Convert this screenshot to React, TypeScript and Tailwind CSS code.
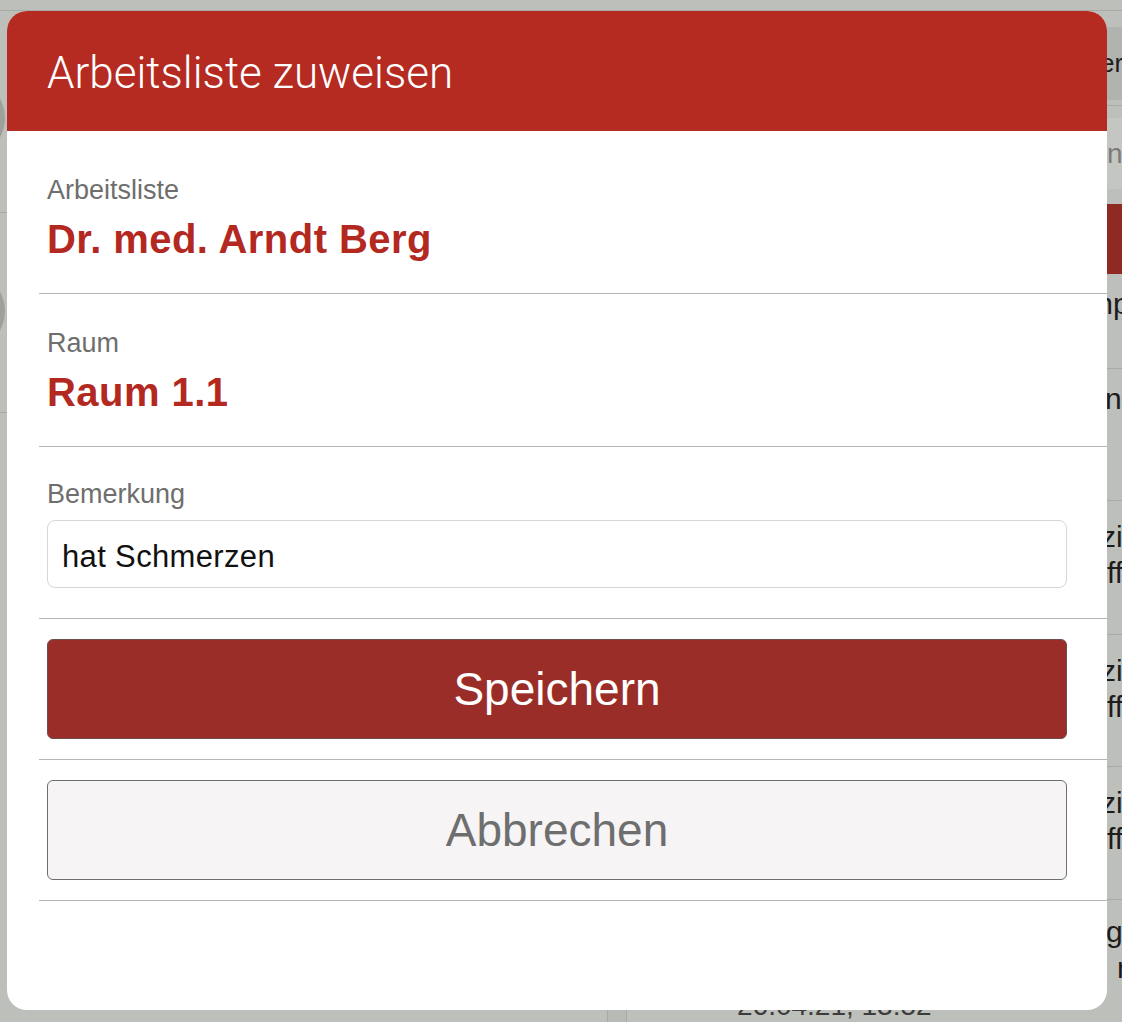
import React from "react";

const font = "font-['Liberation_Sans',Arial,sans-serif]";

function ListRow({
  lines,
  className,
}: {
  lines: { text: string; left: string; top: string }[];
  className: string;
}) {
  return (
    <div className={`flex flex-col border-b border-[#a8aaa6] ${className}`}>
      {lines.map((l, i) => (
        <div
          key={i}
          className={`whitespace-nowrap text-[30px] leading-[36px] text-[#1c1c1c] ${l.left} ${l.top}`}
        >
          {l.text}
        </div>
      ))}
    </div>
  );
}

export default function App() {
  return (
    <div className={`relative w-[1122px] h-[1022px] overflow-hidden bg-[#bdbfbb] ${font}`}>
      {/* app behind the dialog */}
      <div className="h-[11px] border-b border-[#a8aaa6]" />
      <div className="flex h-[1011px]">
        {/* patient list */}
        <div className="w-[607px] flex flex-col">
          <div className="h-[202px] flex items-center border-b border-[#a8aaa6]">
            <div className="w-20 h-20 -ml-[75px] mt-[12px] rounded-full bg-[#9ea09c]" />
          </div>
          <div className="h-[200px] flex items-center border-b border-[#a8aaa6]">
            <div className="w-20 h-20 -ml-[75px] -mt-[4px] rounded-full bg-[#9ea09c]" />
          </div>
        </div>
        <div className="w-[20px] border-x border-[#a8aaa6] bg-[#b8bab6]" />
        {/* worklist */}
        <div className="flex-1 flex flex-col overflow-hidden">
          <div className="h-[16px]" />
          <div className="h-[73px] bg-[#b1b3af] flex items-center pl-[473px] text-[26px] text-[#1c1c1c] whitespace-nowrap">
            erledigt
          </div>
          <div className="h-[6px] border-b border-[#a8aaa6]" />
          <div className="h-[12px]" />
          <div className="h-[72px] bg-[#c4c6c2] flex items-center pl-[480px] text-[28px] text-[#7a7a7a] whitespace-nowrap">
            n
          </div>
          <div className="h-[15px]" />
          <div className="h-[70px] bg-[#8f2a23]" />
          <ListRow
            className="h-[95px]"
            lines={[{ text: "mpfang", left: "pl-[461px]", top: "pt-[12px]" }]}
          />
          <ListRow
            className="h-[133px]"
            lines={[{ text: "n", left: "pl-[478px]", top: "pt-[12px]" }]}
          />
          <ListRow
            className="h-[134px]"
            lines={[
              { text: "zimmer", left: "pl-[474px]", top: "pt-[18px]" },
              { text: "ffen", left: "pl-[480px]", top: "" },
            ]}
          />
          <ListRow
            className="h-[133px]"
            lines={[
              { text: "zimmer", left: "pl-[474px]", top: "pt-[18px]" },
              { text: "ffen", left: "pl-[480px]", top: "" },
            ]}
          />
          <ListRow
            className="h-[133px]"
            lines={[
              { text: "zimmer", left: "pl-[474px]", top: "pt-[18px]" },
              { text: "ffen", left: "pl-[480px]", top: "" },
            ]}
          />
          <div className="flex flex-col">
            <div className="pl-[479px] pt-[14px] text-[30px] leading-[36px] text-[#1c1c1c]">g</div>
            <div className="pl-[490px] text-[30px] leading-[36px] text-[#1c1c1c]">r</div>
            <div className="pl-[110px] pt-[4px] text-[28px] leading-[32px] text-[#3c3c3c] whitespace-nowrap">
              26.04.21, 13:52
            </div>
          </div>
        </div>
      </div>

      {/* dialog */}
      <div className="absolute left-[7px] top-[11px] w-[1100px] h-[999px] bg-white rounded-[20px] overflow-hidden">
        <div className="h-[120px] bg-[#b52a21] pl-10 pt-[40px] font-['Roboto',sans-serif] font-light text-[44px] leading-[44px] text-white">
          Arbeitsliste zuweisen
        </div>

        <div className="ml-[32px] pl-2 pr-10 pt-[43px] pb-[30px] border-b border-[#b5b5b5]">
          <div className="text-[27px] leading-[32px] text-[#6e6e6e]">Arbeitsliste</div>
          <div className="mt-[9px] text-[40px] leading-[48px] font-bold tracking-[0.45px] text-[#b3281f]">
            Dr. med. Arndt Berg
          </div>
        </div>

        <div className="ml-[32px] pl-2 pr-10 pt-[33px] pb-[30px] border-b border-[#b5b5b5]">
          <div className="text-[27px] leading-[32px] text-[#6e6e6e]">Raum</div>
          <div className="mt-[9px] text-[40px] leading-[48px] font-bold tracking-[0.45px] text-[#b3281f]">
            Raum 1.1
          </div>
        </div>

        <div className="ml-[32px] pl-2 pr-10 pt-[31px] pb-[30px] border-b border-[#b5b5b5]">
          <div className="text-[27px] leading-[32px] text-[#6e6e6e]">Bemerkung</div>
          <div className="mt-[10px] h-[68px] flex items-center pt-1 px-[14px] border border-[#d6d6d6] rounded-[8px] text-[31px] leading-[31px] tracking-[0.35px] text-[#111111]">
            hat Schmerzen
          </div>
        </div>

        <div className="ml-[32px] pl-2 pr-10 py-5 border-b border-[#b5b5b5]">
          <button className="w-full h-[100px] rounded-[6px] bg-[#9a2d27] border border-[#6f4f4c] text-[46px] leading-[46px] text-white">
            Speichern
          </button>
        </div>

        <div className="ml-[32px] pl-2 pr-10 py-5 border-b border-[#b5b5b5]">
          <button className="w-full h-[100px] rounded-[6px] bg-[#f6f4f5] border border-[#6e6e6e] text-[46px] leading-[46px] text-[#6e6e6e]">
            Abbrechen
          </button>
        </div>
      </div>
    </div>
  );
}
